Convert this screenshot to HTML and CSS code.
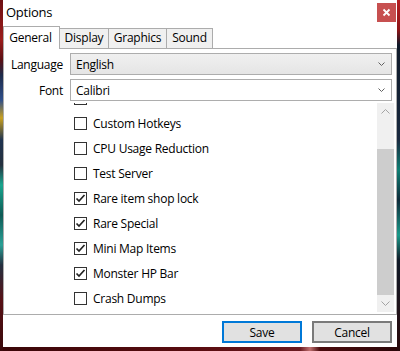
FILE: index.html
```html
<!DOCTYPE html>
<html>
	<head>
		<meta charset="UTF-8">
		<title>Options</title>
		<link rel="stylesheet" href="styles.css">
	</head>
	<body>
		<div class="window">
			<div class="titlebar">
				<span class="title">Options</span>
				<span class="close">
					<svg width="9" height="9" viewBox="0 0 9 9"><path d="M1.5 1.5 L7.5 7.5 M7.5 1.5 L1.5 7.5" stroke="#fff" stroke-width="1.8"/></svg>
				</span>
			</div>
			<div class="tabs">
				<span class="tab active">General</span>
				<span class="tab tab-display">Display</span>
				<span class="tab tab-graphics">Graphics</span>
				<span class="tab tab-sound">Sound</span>
			</div>
			<div class="panel">
				<div class="field">
					<label class="field-label">Language</label>
					<div class="combo combo-list">
						<span>English</span>
						<svg class="chev" width="7" height="5" viewBox="0 0 7 5"><path d="M0.5 0.5 L3.5 3.5 L6.5 0.5" fill="none" stroke="#606060" stroke-width="1"/></svg>
					</div>
				</div>
				<div class="field">
					<label class="field-label">Font</label>
					<div class="combo">
						<span>Calibri</span>
						<svg class="chev" width="7" height="5" viewBox="0 0 7 5"><path d="M0.5 0.5 L3.5 3.5 L6.5 0.5" fill="none" stroke="#606060" stroke-width="1"/></svg>
					</div>
				</div>
				<div class="list-wrap">
					<div class="list">
						<div class="list-inner">
							<!-- row scrolled mostly out of view: only the bottom of its box shows -->
							<div class="item"><span class="box"></span></div>
							<div class="item"><span class="box"></span>Custom Hotkeys</div>
							<div class="item"><span class="box"></span>CPU Usage Reduction</div>
							<div class="item"><span class="box"></span>Test Server</div>
							<div class="item"><span class="box checked"><svg width="11" height="11" viewBox="0 0 11 11"><path d="M1.5 5.5 L4 8 L9.5 2" fill="none" stroke="#222" stroke-width="1.7"/></svg></span>Rare item shop lock</div>
							<div class="item"><span class="box checked"><svg width="11" height="11" viewBox="0 0 11 11"><path d="M1.5 5.5 L4 8 L9.5 2" fill="none" stroke="#222" stroke-width="1.7"/></svg></span>Rare Special</div>
							<div class="item"><span class="box checked"><svg width="11" height="11" viewBox="0 0 11 11"><path d="M1.5 5.5 L4 8 L9.5 2" fill="none" stroke="#222" stroke-width="1.7"/></svg></span>Mini Map Items</div>
							<div class="item"><span class="box checked"><svg width="11" height="11" viewBox="0 0 11 11"><path d="M1.5 5.5 L4 8 L9.5 2" fill="none" stroke="#222" stroke-width="1.7"/></svg></span>Monster HP Bar</div>
							<div class="item"><span class="box"></span>Crash Dumps</div>
						</div>
					</div>
					<div class="scrollbar">
						<div class="sb-btn">
							<svg width="9" height="5" viewBox="0 0 9 5"><path d="M0.5 4.5 L4.5 0.5 L8.5 4.5" fill="none" stroke="#a3a3a3" stroke-width="1"/></svg>
						</div>
						<div class="sb-track"></div>
						<div class="sb-thumb"></div>
						<div class="sb-btn">
							<svg width="9" height="5" viewBox="0 0 9 5"><path d="M0.5 0.5 L4.5 4.5 L8.5 0.5" fill="none" stroke="#a3a3a3" stroke-width="1"/></svg>
						</div>
					</div>
				</div>
			</div>
			<div class="buttons">
				<button class="btn btn-default">Save</button>
				<button class="btn">Cancel</button>
			</div>
		</div>
	</body>
</html>
```

FILE: styles.css
```css
html,body{
	margin: 0;
	height: 100%;
}
body{
	background-color: #2a0608;
	background-image:
		linear-gradient(#6e0f12 0px, #9a1c1c 40px, #5a1014 60px, #1d2a4a 75px, #2f4f8a 100px, #c8a020 118px, #1f3350 140px, #24303e 165px, #18a58e 185px, #0e5a55 215px, #2aa096 245px, #243040 265px, #571015 300px, #3a0a0c 351px),
		linear-gradient(#b51e22 0px, #8d1518 30px, #101a2a 45px, #1a2a40 140px, #0f7f74 170px, #0e2a3a 200px, #1a9a8a 235px, #101a28 260px, #2b0a0c 351px),
		linear-gradient(90deg, #3a0608, #5a0c10 200px, #6a1a20 300px, #c07070 310px, #4a0a0c 320px, #2a0608);
	background-size: 3px 100%, 3px 100%, 100% 100%;
	background-position: left top, right top, left top;
	background-repeat: no-repeat;
	font-family: "Segoe UI", "Open Sans", "Noto Sans", sans-serif;
	font-size: 12px;
	letter-spacing: -0.25px;
	color: #000;
}
.window{
	margin-left: 3px;
	width: 394px;
	height: 347px;
	background: #fff;
	display: flex;
	flex-direction: column;
}
.titlebar{
	height: 25px;
	display: flex;
	align-items: flex-start;
	justify-content: space-between;
}
.title{
	font-size: 13px;
	padding: 3px 0 0 3px;
}
.close{
	width: 19px;
	height: 19px;
	margin: 3px 1px 0 0;
	background: #c75050;
	display: flex;
	align-items: center;
	justify-content: center;
}
.tabs{
	height: 23px;
	display: flex;
	align-items: flex-end;
	border-bottom: 1px solid #acacac;
}
.tab{
	box-sizing: border-box;
	height: 20px;
	border: 1px solid #acacac;
	border-bottom: none;
	background: #f0f0f0;
	margin-left: -1px;
	text-align: center;
	line-height: 18px;
}
.tab.active{
	height: 23px;
	width: 57px;
	margin-left: 0;
	margin-bottom: -1px;
	background: #fff;
	line-height: 21px;
	padding-right: 2px;
}
.tab-display{ width: 50px; }
.tab-graphics{ width: 59px; }
.tab-sound{ width: 47px; }
.panel{
	box-sizing: border-box;
	height: 266px;
	border: 1px solid #acacac;
	border-top: none;
	display: flex;
	flex-direction: column;
}
.field{
	display: flex;
	align-items: center;
	margin-top: 4px;
}
.field-label{
	width: 59px;
	text-align: right;
	margin-right: 7px;
}
.combo{
	box-sizing: border-box;
	width: 322px;
	height: 22px;
	border: 1px solid #adadad;
	background: #fff;
	display: flex;
	align-items: center;
	justify-content: space-between;
	padding: 0 6px 0 5px;
}
.combo-list{
	background: linear-gradient(#f0f0f0, #e5e5e5);
}
.chev{
	margin-top: 1px;
}
.list-wrap{
	display: flex;
	height: 209px;
	margin-top: 2px;
}
.list{
	flex: 1;
	overflow: hidden;
}
.list-inner{
	margin-top: -17px;
}
.item{
	height: 25px;
	display: flex;
	align-items: center;
	padding-left: 70px;
}
.box{
	box-sizing: border-box;
	width: 13px;
	height: 13px;
	border: 1px solid #333;
	background: #fff;
	margin-right: 6px;
	display: flex;
	align-items: center;
	justify-content: center;
}
.scrollbar{
	width: 17px;
	margin-right: 2px;
	background: #f0f0f0;
	display: flex;
	flex-direction: column;
}
.sb-btn{
	height: 17px;
	display: flex;
	align-items: center;
	justify-content: center;
}
.sb-track{
	height: 29px;
}
.sb-thumb{
	flex: 1;
	background: #cdcdcd;
}
.buttons{
	display: flex;
	justify-content: flex-end;
	gap: 10px;
	padding: 6px 5px 0 0;
}
.btn{
	box-sizing: border-box;
	width: 80px;
	height: 22px;
	font-family: inherit;
	font-size: 12px;
	letter-spacing: inherit;
	background: #e1e1e1;
	border: 2px solid #7a7a7a;
	padding: 0;
	color: #000;
}
.btn-default{
	border-color: #0078d7;
}
```
